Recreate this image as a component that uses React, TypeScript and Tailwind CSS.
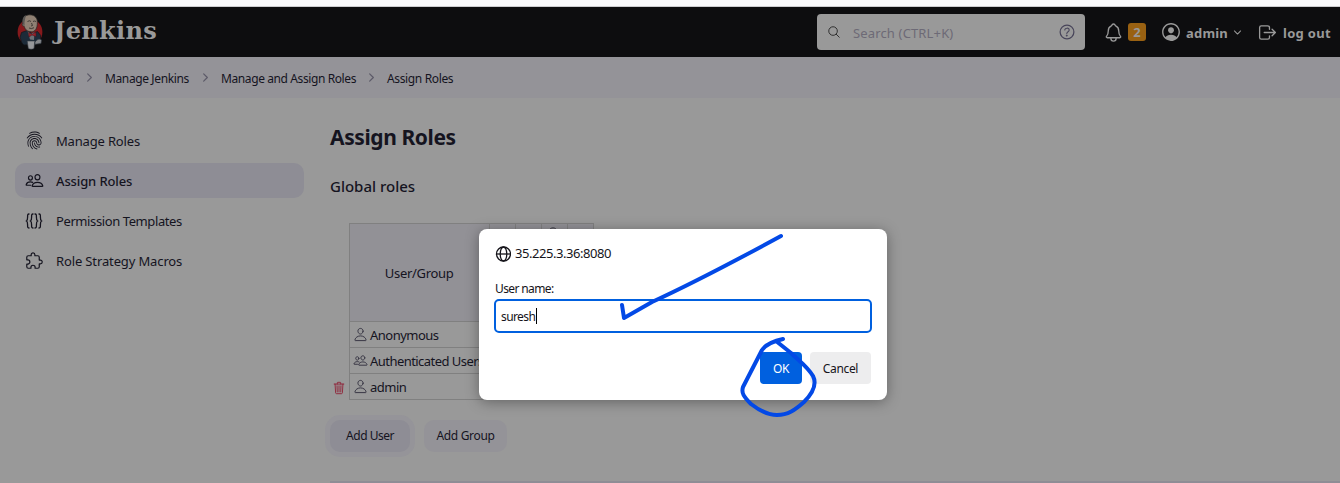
import {
  IoChevronDownOutline,
  IoChevronForwardOutline,
  IoExtensionPuzzleOutline,
  IoFingerPrintOutline,
  IoHelpCircleOutline,
  IoLogOutOutline,
  IoNotificationsOutline,
  IoPeopleOutline,
  IoPersonCircleOutline,
  IoPersonOutline,
  IoSearchOutline,
  IoTrashOutline,
} from "react-icons/io5";

function JenkinsMark() {
  return (
    <svg width="26" height="36" viewBox="0 0 26 36" className="block shrink-0">
      <ellipse cx="13" cy="18" rx="12.4" ry="13" fill="#86191c" />
      <path d="M5 29 3 23.500 4.500 18.500l5.500-2 5 3 5.500-2 3.200 4-.7 6.500L19 30l-12 1z" fill="#1d2b39" stroke="#11151b" strokeWidth=".7" />
      <path d="m10.500 17 3.500 3 3.500-2-.5 8-4-.5z" fill="#6d7176" />
      <path d="M5.800 9C5.600 3.500 8.500.8 12.800.8c4.800 0 7.800 3.200 7.500 7.700.3 5.500-2 9.500-6 9.300C9.500 17.600 8 15 7.300 12.500 5 12 4.600 10 5.800 9Z" fill="#8f8073" stroke="#2c2826" strokeWidth=".8" />
      <path d="M5.800 10C4.800 4 7 1.500 9.500 1.300 7.800 3.500 8.200 6 7.500 8.500L7.600 12Z" fill="#5a5754" />
      <path d="M10.500 7.500q2-1.500 3.500 0M16 7.500q1.500-1 3 0M14.500 9l1 2.500-1.500.5M12 14q2.500 1.300 5-.3" fill="none" stroke="#2c2826" strokeWidth=".8" />
      <path d="m11.500 18.500 3.500 2 3.800-2.500.3 4.500-4.100-1.500-3 2z" fill="#98232a" stroke="#4c1118" strokeWidth=".5" />
      <path d="M10.200 27h7.600l-.8 7.500c-1.700 1-4 1-5.700 0z" fill="#96979a" stroke="#333941" strokeWidth=".6" />
      <path d="M18 28q3.500-4.500 6.500-2l-.5 3.500-6 .8z" fill="#85878b" stroke="#303840" strokeWidth=".7" />
    </svg>
  );
}

function GlobeIcon() {
  return (
    <svg width="16" height="16" viewBox="0 0 16 16" fill="none" stroke="currentColor" strokeWidth="1.3" className="shrink-0">
      <circle cx="8.500" cy="8" r="7" />
      <ellipse cx="8.500" cy="8" rx="3.300" ry="7" />
      <path d="M1.500 8h14" />
    </svg>
  );
}

function BracesIcon() {
  return (
    <svg width="18" height="18" viewBox="0 0 18 18" fill="none" stroke="currentColor" strokeWidth="1.3" strokeLinecap="round" className="shrink-0">
      <path d="M4 2C2.500 2 2.600 3 2.600 5S2.400 8.500 1.500 9c.9.5 1.100 2 1.100 4S2.500 16 4 16" />
      <path d="M8 2C6.500 2 6.600 3 6.600 5S6.400 8.500 5.500 9c.9.5 1.100 2 1.100 4S6.500 16 8 16" />
      <path d="M10 2c1.500 0 1.400 1 1.400 3s.2 3.500 1.100 4c-.9.5-1.100 2-1.100 4s.1 3-1.400 3" />
      <path d="M14 2c1.500 0 1.400 1 1.400 3s.2 3.500 1.100 4c-.9.5-1.100 2-1.100 4s.1 3-1.400 3" />
    </svg>
  );
}

function Header() {
  return (
    <header className="flex h-[50px] shrink-0 items-center bg-[#0d0d0f] text-[#999]">
      <div className="flex w-[817px] items-center pl-[17px]">
        <JenkinsMark />
        <span className="ml-[11px] -mt-[3px] font-['DejaVu_Serif',serif] text-[24px] leading-7 font-bold tracking-[0.35px]">Jenkins</span>
      </div>
      <div className="flex h-9 w-[268px] items-center rounded bg-[#999] px-[10px]">
        <IoSearchOutline size={14} className="text-[#222]" />
        <span className="mt-[3px] ml-3 flex-1 text-[13px] tracking-[0.15px] text-[#6d6a76]">Search (CTRL+K)</span>
        <IoHelpCircleOutline size={20} className="-mr-[2px] stroke-current stroke-[8px] text-[#48455a]" />
      </div>
      <div className="flex flex-1 items-center text-[13px] font-bold">
        <IoNotificationsOutline size={21} className="ml-[18px]" />
        <span className="ml-1 flex h-[18px] w-[18px] items-center justify-center rounded-[3px] bg-[#996112] pt-px">2</span>
        <IoPersonCircleOutline size={22} className="ml-[14px]" />
        <span className="mt-[3px] ml-1 w-[43px] tracking-[0.2px] whitespace-nowrap">admin</span>
        <IoChevronDownOutline size={11} className="ml-[3px]" />
        <IoLogOutOutline size={21} className="ml-[14px]" />
        <span className="mt-[3px] ml-[5px] tracking-[0.3px] whitespace-nowrap">log out</span>
      </div>
    </header>
  );
}

function Breadcrumbs() {
  return (
    <nav className="flex h-[41px] shrink-0 items-center bg-[#949398] pt-[3px] pl-4 text-[12px] whitespace-nowrap">
      <span className="w-[67px] tracking-[-0.55px]">Dashboard</span>
      <IoChevronForwardOutline size={13} className="-mt-[3px] text-[#5c5a68]" />
      <span className="ml-[9px] w-[94px] tracking-[-0.38px]">Manage Jenkins</span>
      <IoChevronForwardOutline size={13} className="-mt-[3px] text-[#5c5a68]" />
      <span className="ml-[9px] w-[144px] tracking-[-0.4px]">Manage and Assign Roles</span>
      <IoChevronForwardOutline size={13} className="-mt-[3px] text-[#5c5a68]" />
      <span className="ml-[9px] tracking-[-0.36px]">Assign Roles</span>
    </nav>
  );
}

function Sidebar() {
  return (
    <aside className="flex w-[330px] flex-col gap-[5px] pt-[25px] pl-[15px] text-[13px]">
      <div className="flex h-[35px] w-[289px] items-center gap-3 rounded-[10px] pl-[10px]">
        <IoFingerPrintOutline size={19} />
        <span className="mt-0.5 tracking-[-0.17px]">Manage Roles</span>
      </div>
      <div className="flex h-[35px] w-[289px] items-center gap-3 rounded-[10px] bg-[#8e8d95] pl-[10px]">
        <IoPeopleOutline size={19} className="stroke-current stroke-[14px]" />
        <span className="mt-0.5 font-medium tracking-[-0.12px]">Assign Roles</span>
      </div>
      <div className="flex h-[35px] w-[289px] items-center gap-[13px] rounded-[10px] pl-[10px]">
        <BracesIcon />
        <span className="mt-0.5 tracking-[-0.4px]">Permission Templates</span>
      </div>
      <div className="flex h-[35px] w-[289px] items-center gap-3 rounded-[10px] pl-[10px]">
        <IoExtensionPuzzleOutline size={19} />
        <span className="mt-0.5 tracking-[-0.13px]">Role Strategy Macros</span>
      </div>
    </aside>
  );
}

const cell = "border border-[#808080] p-0";

function RolesTable() {
  return (
    <table className="ml-[-1px] w-[265px] table-fixed border-collapse text-[13px]">
      <colgroup>
        <col className="w-5" />
        <col className="w-[140px]" />
        <col className="w-[26px]" />
        <col className="w-[26px]" />
        <col className="w-[26px]" />
        <col className="w-[26px]" />
      </colgroup>
      <tbody>
        <tr className="h-[98px]">
          <td />
          <td className={cell + " bg-[#929196] pt-[3px] text-center tracking-[-0.3px]"}>User/Group</td>
          <td className={cell + " bg-[#929196]"} />
          <td className={cell + " bg-[#929196]"} />
          <td className={cell + " bg-[#929196] align-top"}>
            <IoHelpCircleOutline size={12} className="mt-[2px] ml-[5px] stroke-current stroke-[30px]" />
          </td>
          <td className={cell + " bg-[#929196]"} />
        </tr>
        <tr className="h-[26px]">
          <td />
          <td className={cell}>
            <span className="flex h-5 items-center gap-[3px] pl-[3px] whitespace-nowrap">
              <IoPersonOutline size={15} className="shrink-0 text-[#333140]" />
              <span className="mt-[3px] -ml-[0.5px] tracking-[-0.52px]">Anonymous</span>
            </span>
          </td>
          <td className={cell} /><td className={cell} /><td className={cell} /><td className={cell} />
        </tr>
        <tr className="h-[26px]">
          <td />
          <td className={cell}>
            <span className="flex h-5 items-center gap-[3px] pl-[3px] whitespace-nowrap">
              <IoPeopleOutline size={15} className="shrink-0 text-[#333140]" />
              <span className="mt-[3px] -ml-[0.5px] tracking-[-0.55px]">Authenticated Users</span>
            </span>
          </td>
          <td className={cell} /><td className={cell} /><td className={cell} /><td className={cell} />
        </tr>
        <tr className="h-[26px]">
          <td className="p-0"><IoTrashOutline size={14} className="mt-0.5 ml-[3px] stroke-current stroke-[10px] text-[#8f1f35]" /></td>
          <td className={cell}>
            <span className="flex h-5 items-center gap-[3px] pl-[3px] whitespace-nowrap">
              <IoPersonOutline size={15} className="shrink-0 text-[#333140]" />
              <span className="mt-[3px] -ml-[0.5px] tracking-[-0.5px]">admin</span>
            </span>
          </td>
          <td className={cell} /><td className={cell} /><td className={cell} /><td className={cell} />
        </tr>
      </tbody>
    </table>
  );
}

function PromptDialog() {
  return (
    <div className="absolute top-[229px] left-[479px] h-[171px] w-[408px] rounded-lg bg-white px-[15px] pt-4 text-[#15141a] shadow-[0_2px_14px_rgba(0,0,0,0.35)]">
      <div className="flex h-[18px] items-center gap-1 pl-[1px] text-[13px]">
        <GlobeIcon />
        <span className="-mt-px tracking-[-0.45px] whitespace-nowrap">35.225.3.36:8080</span>
      </div>
      <div className="mt-[17px] h-[18px] pl-[1px] text-[12px] leading-[18px] tracking-[-0.62px]">User name:</div>
      <div className="mt-[1px] flex h-[34px] w-[378px] items-center rounded-[5px] border-2 border-[#0060df] pl-[5px] text-[12px]">
        <span className="mt-0.5 tracking-[-0.6px]">suresh</span>
        <span className="ml-[0.5px] h-4 w-px bg-black" />
      </div>
      <div className="mt-[19px] flex justify-end gap-2 pr-[1px] text-[12px]">
        <button className="h-8 w-[42px] rounded bg-[#0060df] pt-0.5 tracking-[-0.4px] text-white">OK</button>
        <button className="h-8 w-[61px] rounded bg-[#ededee] pt-0.5 tracking-[-0.35px]">Cancel</button>
      </div>
    </div>
  );
}

function PenMarks() {
  return (
    <svg width="1340" height="483" viewBox="0 0 1340 483" fill="none" stroke="#0349e6" strokeWidth="4" strokeLinecap="round" strokeLinejoin="round" className="pointer-events-none absolute top-0 left-0">
      <path d="M781 236 Q700 280 652 302 L624 318 L622 305" />
      <path d="M783 339 C774 341 766 344 762 350 L743 387 C741 393 744 397 751 404 C760 411 768 415 777 415 C788 415 795 410 804 402 C814 392 817 384 813 376 C807 366 799 361 791 353 L776 341" />
    </svg>
  );
}

export default function App() {
  return (
    <div className="relative flex h-[483px] w-[1340px] flex-col overflow-hidden bg-[#999] font-['Noto_Sans','Open_Sans',sans-serif] text-[#15141f]">
      <div className="h-[7px] shrink-0 border-b border-[#cccccf] bg-[#f9f9fb]" />
      <Header />
      <Breadcrumbs />
      <div className="flex flex-1">
        <Sidebar />
        <main className="flex flex-1 flex-col">
          <h1 className="mt-6 h-[30px] text-[21px] leading-[30px] font-bold tracking-[-0.4px]">Assign Roles</h1>
          <h2 className="mt-[22px] h-6 text-[15px] leading-6 font-medium">Global roles</h2>
          <div className="mt-[25px]"><RolesTable /></div>
          <div className="mt-5 flex gap-[14px] text-[12px]">
            <button className="h-8 w-[80px] rounded-[10px] bg-[#8e8d95] tracking-[-0.5px] shadow-[0_0_0_5px_#959499]">Add User</button>
            <button className="h-8 w-[83px] rounded-[10px] bg-[#949398] tracking-[-0.33px]">Add Group</button>
          </div>
          <div className="mt-[29px] h-0.5 bg-[#8e8d95]" />
        </main>
      </div>
      <PromptDialog />
      <PenMarks />
    </div>
  );
}
